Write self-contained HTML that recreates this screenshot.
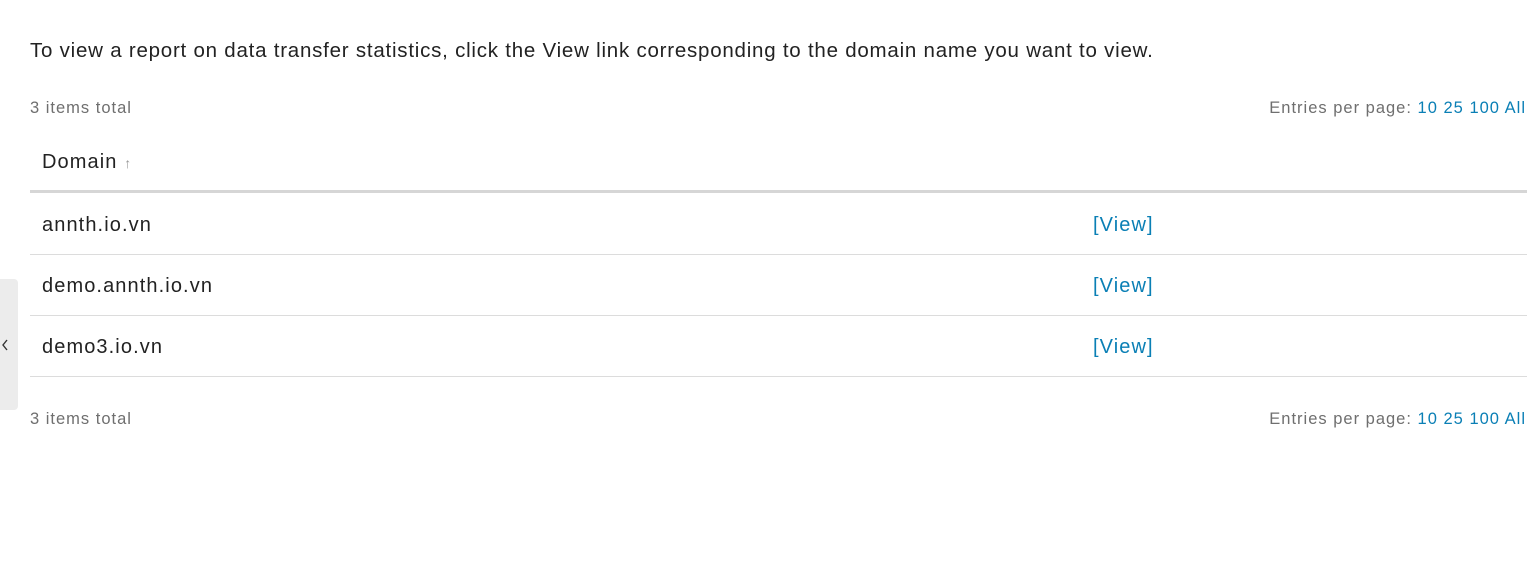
<!DOCTYPE html>
<html><head><style>
body{margin:0;width:1538px;height:564px;background:#fff;font-family:"Liberation Sans",sans-serif;color:#222;position:relative;overflow:hidden}
.a{position:absolute;white-space:nowrap}
.g{color:#6f6f6f;font-size:16.5px;letter-spacing:1px}
.l{color:#0a7fb5}
.d{font-size:20px;letter-spacing:1.1px}
.line{position:absolute;left:30px;width:1497px;height:1px;background:#dcdcdc}
</style></head><body>
<div class="a" style="left:30px;top:39px;font-size:20.5px;letter-spacing:0.77px">To view a report on data transfer statistics, click the View link corresponding to the domain name you want to view.</div>
<div class="a g" style="left:30px;top:99px">3 items total</div>
<div class="a g" style="right:12px;top:99px">Entries per page: <span class="l">10</span> <span class="l">25</span> <span class="l">100</span> <span class="l">All</span></div>
<div class="a d" style="left:42px;top:151px">Domain <span style="color:#999;font-size:14px">↑</span></div>
<div class="line" style="top:190px;height:3px;background:#d6d6d6"></div>
<div class="a d" style="left:42px;top:214px">annth.io.vn</div>
<div class="a l d" style="left:1093px;top:214px">[View]</div>
<div class="line" style="top:254px"></div>
<div class="a d" style="left:42px;top:275px">demo.annth.io.vn</div>
<div class="a l d" style="left:1093px;top:275px">[View]</div>
<div class="line" style="top:315px"></div>
<div class="a d" style="left:42px;top:336px">demo3.io.vn</div>
<div class="a l d" style="left:1093px;top:336px">[View]</div>
<div class="line" style="top:376px"></div>
<div class="a g" style="left:30px;top:410px">3 items total</div>
<div class="a g" style="right:12px;top:410px">Entries per page: <span class="l">10</span> <span class="l">25</span> <span class="l">100</span> <span class="l">All</span></div>
<div style="position:absolute;left:-4px;top:279px;width:22px;height:131px;background:#ececec;border-radius:4px"></div>
<svg style="position:absolute;left:1px;top:339px" width="8" height="12"><path d="M6 1 L2 6 L6 11" stroke="#333" stroke-width="1.4" fill="none"/></svg>
</body></html>
